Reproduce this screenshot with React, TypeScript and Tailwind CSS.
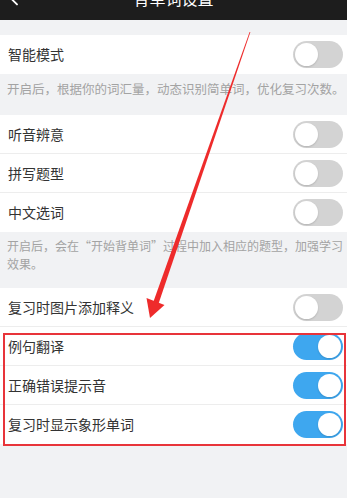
import { ArrowLeft } from "lucide-react";

const font = { fontFamily: '"Noto Sans CJK SC", "Noto Sans", sans-serif' };

function Toggle({ on }: { on: boolean }) {
  return (
    <div
      className={`flex h-[27px] w-[50px] items-center rounded-full px-[2px] ${
        on ? "justify-end bg-[#3ea7ef]" : "justify-start bg-[#d3d3d3]"
      }`}
    >
      <div className="h-[23px] w-[23px] rounded-full bg-white shadow-[0_1px_2px_rgba(0,0,0,0.15)]" />
    </div>
  );
}

function Row({ label, on, last }: { label: string; on?: boolean; last?: boolean }) {
  return (
    <div
      className={`flex h-[39px] items-center justify-between bg-white pl-[8px] pr-[4px] ${
        last ? "" : "border-b border-[#ededed]"
      }`}
    >
      <span className="text-[14px] text-[#333333]">{label}</span>
      <Toggle on={!!on} />
    </div>
  );
}

export default function App() {
  return (
    <div className="relative h-[498px] w-[347px] overflow-hidden bg-[#f1f2f4]" style={font}>
      <div className="h-[20px] overflow-hidden bg-[#1d1d1d]">
        <div className="relative -mt-[23px] flex h-[42px] items-center justify-center">
          <ArrowLeft className="absolute left-[6px] h-[22px] w-[22px] text-white" strokeWidth={2} />
          <span className="text-[16px] text-white">背单词设置</span>
        </div>
      </div>

      <div className="h-[15px]" />
      <Row label="智能模式" last />
      <div className="h-[41px] px-[7px] pt-[6px] text-[12.5px] leading-[18px] text-[#a3a3a3] whitespace-nowrap">
        开启后，根据你的词汇量，动态识别简单词，优化复习次数。
      </div>

      <Row label="听音辨意" />
      <Row label="拼写题型" />
      <Row label="中文选词" last />
      <div className="h-[56px] px-[7px] pt-[5px] text-[12px] leading-[18px] text-[#a3a3a3]">
        <div className="whitespace-nowrap">开启后，会在“开始背单词”过程中加入相应的题型，加强学习</div>
        <div>效果。</div>
      </div>

      <Row label="复习时图片添加释义" />
      <Row label="例句翻译" on />
      <Row label="正确错误提示音" on />
      <Row label="复习时显示象形单词" on last />

      <div className="absolute left-[3px] top-[333px] h-[113px] w-[343px] border-2 border-[#e8343a]" />

      <svg className="absolute left-0 top-0" width="347" height="498" viewBox="0 0 347 498">
        <polygon points="249.6,32 250.4,32 158.6,303.5 153.4,301.8" fill="#ee2b2b" />
        <polygon points="146.5,298 164.5,305 150,318" fill="#ee2b2b" />
      </svg>
    </div>
  );
}
